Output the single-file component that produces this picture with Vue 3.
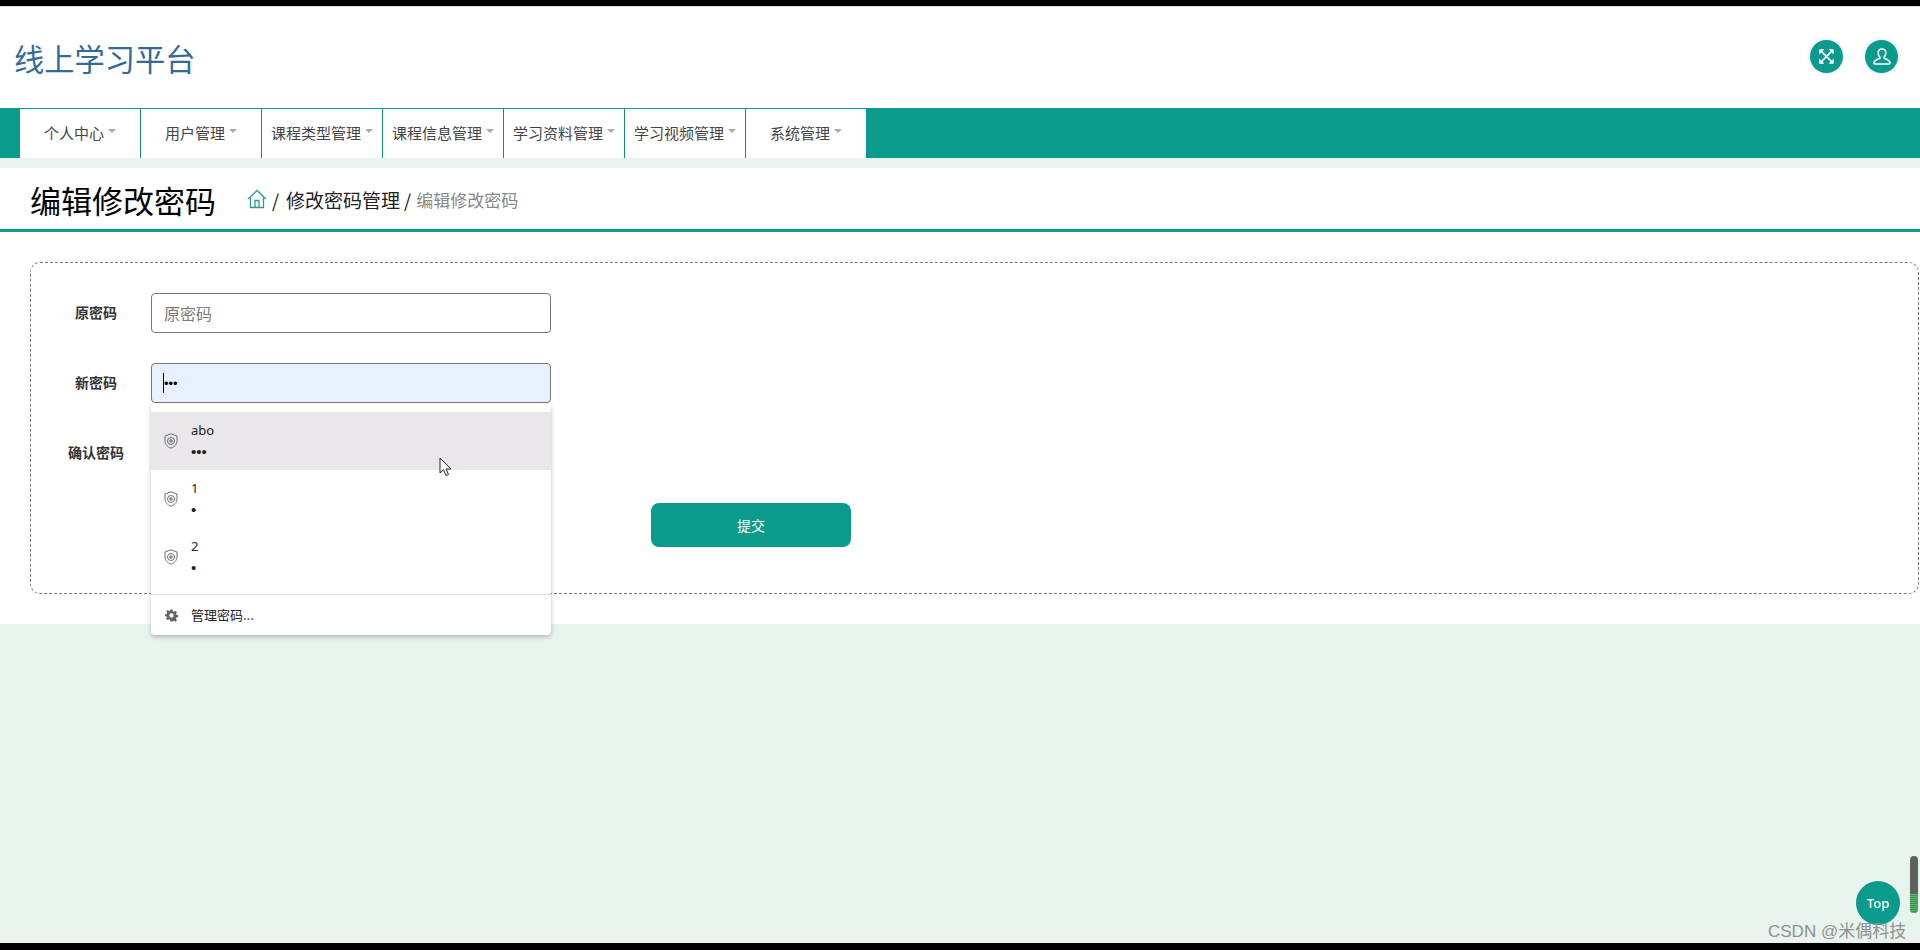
<template>
  <div class="page">
    <div class="edge-top"></div>

    <header class="top">
      <div class="logo">线上学习平台</div>
      <div class="top-actions">
        <span class="round-btn">
          <svg width="17" height="17" viewBox="0 0 20 20" fill="none" stroke="#fff" stroke-width="1.800">
            <path d="M4 4l12 12M16 4L4 16" />
            <path d="M1.500 1.500h6l-6 6zM18.500 1.500v6l-6-6zM18.500 18.500h-6l6-6zM1.500 18.500v-6l6 6z" fill="#fff" stroke="none" />
          </svg>
        </span>
        <span class="round-btn">
          <svg width="20" height="20" viewBox="0 0 20 20" fill="none" stroke="#fff" stroke-width="1.500">
            <path d="M10 2c-2.400 0-3.800 1.800-3.800 4 0 1.700.7 3.100 1.700 4v1.300c-2.500.9-5.400 2-5.900 4.200-.2.9.1 1.500 1 1.500h14c.9 0 1.200-.6 1-1.500-.5-2.200-3.400-3.300-5.900-4.200V10c1-.9 1.700-2.300 1.700-4 0-2.200-1.400-4-3.800-4z" />
          </svg>
        </span>
      </div>
    </header>

    <nav class="nav">
      <a v-for="item in menu" :key="item" class="nav-item">
        {{ item }}<i class="caret"></i>
      </a>
    </nav>
    <div class="band"></div>

    <div class="crumb-bar">
      <h1 class="title">编辑修改密码</h1>
      <svg class="home" width="20" height="20" viewBox="0 0 20 20" fill="none" stroke="#2a9d92" stroke-width="1.300">
        <path d="M1 10L10 1.500 19 10" />
        <path d="M3.500 8.500V18.500h13V8.500" stroke="#3f8f98" />
        <path d="M8 18.500v-7h4v7" />
      </svg>
      <span class="sep">/</span>
      <span class="crumb">修改密码管理</span>
      <span class="sep">/</span>
      <span class="crumb current">编辑修改密码</span>
    </div>

    <main class="content">
      <form class="card" @submit.prevent>
        <div class="row">
          <label class="label">原密码</label>
          <div class="field">
            <input class="input" type="password" placeholder="原密码" readonly />
          </div>
        </div>

        <div class="row">
          <label class="label">新密码</label>
          <div class="field">
            <input class="input filled" type="password" value="abc" readonly />
            <span class="text-cursor"></span>

            <div class="suggest">
              <div
                v-for="(s, i) in saved"
                :key="s.name"
                class="suggest-row"
                :class="{ active: i === 0 }"
              >
                <svg class="shield" width="14" height="16" viewBox="0 0 14 16" fill="none" stroke="#6d6d70" stroke-width="1">
                  <path d="M7 .8L13 3v5c0 3.400-2.500 5.800-6 7.200C3.500 13.800 1 11.400 1 8V3z" />
                  <circle cx="7" cy="8" r="3.500" />
                  <path d="M7 6v4M5 8h4" stroke-width="1.100" />
                </svg>
                <div class="suggest-text">
                  <span class="suggest-name">{{ s.name }}</span>
                  <span class="suggest-dots">{{ s.dots }}</span>
                </div>
              </div>
              <div class="suggest-foot">
                <svg class="gear" width="13" height="13" viewBox="0 0 24 24" fill="#66666a">
                  <path fill-rule="evenodd" d="M10 1h4l.6 3.200 2 .8L19.300 3.200l2.800 2.800-1.800 2.700.8 2 3.200.6v4l-3.200.6-.8 2 1.800 2.700-2.800 2.800-2.700-1.800-2 .8L14 23h-4l-.6-3.200-2-.8-2.700 1.800-2.800-2.800 1.800-2.700-.8-2L0 14v-4l3.200-.6.8-2L2.200 4.700 5 2l2.700 1.800 1.700-.6zM12 8a4 4 0 1 0 0 8 4 4 0 0 0 0-8z" />
                </svg>
                <span class="foot-text">管理密码...</span>
              </div>
            </div>
          </div>
        </div>

        <div class="row">
          <label class="label">确认密码</label>
          <div class="field">
            <input class="input" type="password" readonly />
          </div>
        </div>

        <div class="actions">
          <button class="submit" type="submit">提交</button>
        </div>
      </form>
    </main>

    <div class="rest"></div>
    <div class="edge-bottom"></div>

    <!-- mouse pointer caught in the capture -->
    <svg class="pointer" width="14" height="20" viewBox="0 0 14 20" fill="#fff" stroke="#222" stroke-width="1">
      <path d="M1 1v15l3.500-3.300L7 18.500l2.500-1-2.400-5.500H12z" />
    </svg>

    <a class="to-top">Top</a>
    <div class="mini-scroll"><span class="mini-fill"></span></div>
    <div class="watermark">CSDN @米偶科技</div>
  </div>
</template>

<script setup>
const menu = ['个人中心', '用户管理', '课程类型管理', '课程信息管理', '学习资料管理', '学习视频管理', '系统管理']

const saved = [
  { name: 'abo', dots: '•••' },
  { name: '1', dots: '•' },
  { name: '2', dots: '•' }
]
</script>

<style scoped>
.page {
  position: relative;
  height: 950px;
  display: flex;
  flex-direction: column;
  overflow: hidden;
  background: #e8f3ee;
  font-family: "Noto Sans CJK SC", "Noto Sans", sans-serif;
  color: #333;
}

.edge-top {
  height: 6px;
  background: #000;
  border-bottom: 1px solid #ddd;
  flex: none;
  box-sizing: content-box;
}

.top {
  height: 101px;
  flex: none;
  background: #fff;
  display: flex;
  align-items: center;
  justify-content: space-between;
  padding: 0 22px 0 14px;
  box-sizing: border-box;
}

.logo {
  font-size: 30.250px;
  color: #33699b;
}

.top-actions {
  display: flex;
  gap: 22px;
  position: relative;
  top: -1px;
}

.round-btn {
  width: 33px;
  height: 33px;
  border-radius: 50%;
  background: #0b9b8d;
  box-shadow: 0 0 4px rgba(120, 120, 200, 0.3);
  display: flex;
  align-items: center;
  justify-content: center;
}

.nav {
  height: 50px;
  flex: none;
  background: #0b9b8d;
  padding: 1px 0 0 20px;
  box-sizing: border-box;
  display: flex;
}

.nav-item {
  width: 121px;
  box-sizing: border-box;
  padding-bottom: 2px;
  background: #fff;
  border-right: 1px solid #1a8a80;
  display: flex;
  align-items: center;
  justify-content: center;
  font-size: 15px;
  color: #444;
}

.nav-item:last-child {
  width: 120px;
  border-right: none;
}

.caret {
  width: 0;
  height: 0;
  margin-left: 4px;
  margin-bottom: 4px;
  border-left: 4px solid transparent;
  border-right: 4px solid transparent;
  border-top: 4px solid #aaa;
}

.band {
  height: 10px;
  flex: none;
  background: #e8f3ee;
}

.crumb-bar {
  height: 64px;
  flex: none;
  box-sizing: border-box;
  padding: 2px 0 0 30px;
  background: #fff;
  border-bottom: 3px solid #0b9b8d;
  display: flex;
  align-items: center;
}

.title {
  margin: 0 31px 0 0;
  font-size: 31px;
  font-weight: 400;
  color: #000;
}

.home {
  margin-right: 5px;
  position: relative;
  top: -1px;
}

.sep {
  font-size: 18px;
  color: #111;
  margin-right: 7px;
}

.crumb {
  font-size: 19px;
  color: #222;
  margin-right: 4px;
}

.crumb + .sep {
  margin-right: 5px;
}

.crumb.current {
  font-size: 17px;
  color: #888;
}

.content {
  flex: none;
  background: #fff;
  padding: 30px 0 30px 30px;
}

.card {
  height: 332px;
  box-sizing: border-box;
  margin-right: 1px;
  padding-top: 30px;
  border: 1px dashed #777;
  border-radius: 10px;
  display: flex;
  flex-direction: column;
  gap: 30px;
}

.row {
  display: flex;
  align-items: center;
  height: 40px;
}

.label {
  width: 100px;
  margin: 0 5px 0 15px;
  padding-bottom: 2px;
  text-align: center;
  font-size: 14px;
  font-weight: 700;
  color: #333;
}

.field {
  position: relative;
  width: 400px;
  height: 40px;
}

.input {
  width: 100%;
  height: 100%;
  box-sizing: border-box;
  padding: 0 12px;
  border: 1px solid #777;
  border-radius: 4px;
  outline: none;
  background: #fff;
  font-family: inherit;
  font-size: 16px;
}

.input::placeholder {
  color: #7a7a7a;
}

.input.filled {
  background: #e8f0fe;
  font-family: "Liberation Sans", sans-serif;
  font-size: 13px;
}

.text-cursor {
  position: absolute;
  left: 12px;
  top: 10px;
  width: 1px;
  height: 20px;
  background: #000;
}

.suggest {
  position: absolute;
  z-index: 2;
  left: 0;
  top: 41px;
  width: 400px;
  padding-top: 8px;
  box-sizing: border-box;
  background: #fff;
  border-radius: 4px;
  box-shadow: 0 2px 4px rgba(0, 0, 0, 0.25);
}

.suggest-row {
  height: 58px;
  display: flex;
  align-items: center;
  padding-left: 13px;
}

.suggest-row.active {
  background: #e9e7ea;
}

.shield {
  flex: none;
  margin-right: 13px;
}

.suggest-text {
  display: flex;
  flex-direction: column;
  font-family: "Noto Sans", sans-serif;
  color: #222;
}

.suggest-name {
  font-size: 13px;
  line-height: 22px;
}

.suggest-dots {
  font-family: "Liberation Sans", sans-serif;
  font-size: 15px;
  line-height: 22px;
}

.suggest-foot {
  height: 41px;
  margin-top: 8px;
  box-sizing: border-box;
  border-top: 1px solid #dcdcdf;
  display: flex;
  align-items: center;
  padding-left: 14px;
  gap: 13px;
  font-size: 13px;
  color: #222;
}

.foot-text {
  position: relative;
  top: -1px;
}

.gear {
  flex: none;
}

.actions {
  padding-left: 620px;
}

.submit {
  display: block;
  width: 200px;
  height: 44px;
  border: none;
  border-radius: 8px;
  background: #0b9b8d;
  color: #fff;
  font-family: inherit;
  font-size: 14px;
}

.rest {
  flex: 1;
}

.edge-bottom {
  height: 7px;
  flex: none;
  background: #000;
}

.pointer {
  position: absolute;
  z-index: 3;
  left: 439px;
  top: 457px;
}

.to-top {
  position: absolute;
  left: 1856px;
  top: 881px;
  width: 44px;
  height: 44px;
  border-radius: 50%;
  background: #0b9b8d;
  color: #fff;
  font-family: "Noto Sans", sans-serif;
  font-size: 13px;
  font-weight: 500;
  display: flex;
  align-items: center;
  justify-content: center;
}

.mini-scroll {
  position: absolute;
  left: 1910px;
  top: 856px;
  width: 8px;
  height: 57px;
  border-radius: 4px;
  background: #5d625f;
  overflow: hidden;
}

.mini-fill {
  position: absolute;
  left: 0;
  right: 0;
  bottom: 0;
  height: 19px;
  background: repeating-linear-gradient(#58b86e 0 1px, #3f8f55 1px 2px);
}

.watermark {
  position: absolute;
  left: 1768px;
  top: 920px;
  font-family: "Liberation Sans", "Noto Sans CJK SC", sans-serif;
  font-size: 17px;
  line-height: 24px;
  color: #8d9290;
  white-space: nowrap;
}
</style>
